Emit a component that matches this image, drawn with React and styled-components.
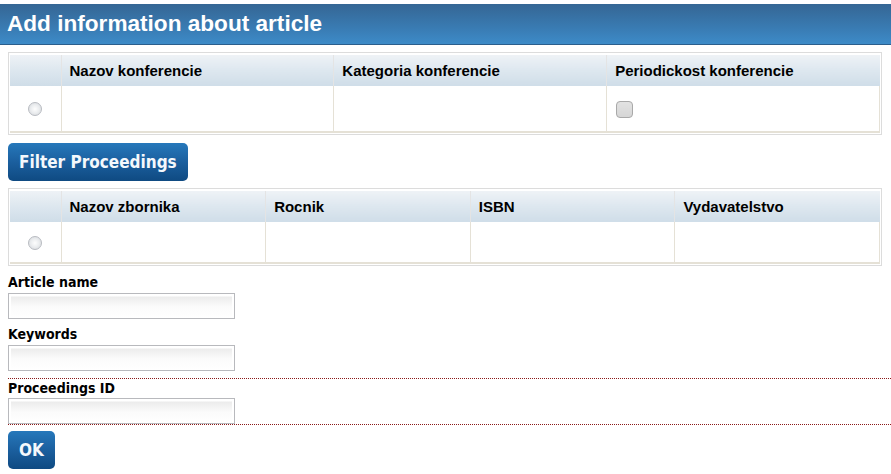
import React from "react";
import styled, { createGlobalStyle } from "styled-components";

const Global = createGlobalStyle`
  html, body { margin: 0; padding: 0; background: #fff; }
  body { font-family: "Liberation Sans", Arial, sans-serif; color: #000; }
`;

const Header = styled.h1`
  margin: 4px 0 0;
  height: 40px;
  padding: 0 7px;
  display: flex;
  align-items: center;
  background: linear-gradient(to bottom, #356694 0%, #3a7fb8 70%, #3d8bc8 100%);
  border-bottom: 1px solid #2b5e8c;
  color: #fff;
  font-family: "Liberation Sans", Arial, sans-serif;
  font-size: 22.6px;
  font-weight: bold;
`;

const Content = styled.div`
  padding: 7px 9px 0 8px;
`;

const Frame = styled.div`
  border: 1px solid #dcdcdc;
  padding: 2px 1px 1px 1px;
`;

const Table = styled.table`
  width: 100%;
  border-collapse: collapse;
  table-layout: fixed;
`;

const Th = styled.th`
  height: 31px;
  padding: 0 8px;
  text-align: left;
  font-size: 15px;
  font-weight: bold;
  background: linear-gradient(to bottom, #eef2f6 0%, #dde7ef 50%, #cfdde8 100%);
  border-left: 1px solid #e4e4e4;
  &:first-child { border-left: none; }
`;

const Td = styled.td`
  height: ${(p) => p.$h}px;
  padding: 0 9px;
  border-left: 1px solid #e5e1d6;
  border-bottom: 2px solid #e5e1d6;
  text-align: ${(p) => (p.$center ? "center" : "left")};
  &:first-child { border-left: none; }
  &:last-child { border-right: 1px solid #e5e1d6; }
`;

const Radio = styled.span`
  display: inline-block;
  width: 12px;
  height: 12px;
  border-radius: 50%;
  border: 1px solid #b9bcc2;
  background: radial-gradient(circle at 50% 50%, #fdfdfd 0%, #eceef0 45%, #d3d6da 100%);
  vertical-align: middle;
`;

const Check = styled.span`
  display: inline-block;
  width: 15px;
  height: 15px;
  border-radius: 4px;
  border: 1px solid #a9a9a9;
  background: linear-gradient(to bottom, #e2e2e2, #d6d6d6);
  vertical-align: middle;
`;

const Button = styled.button`
  display: block;
  height: 38px;
  padding: 0 ${(p) => p.$px}px;
  border: none;
  border-radius: 5px;
  background: linear-gradient(to bottom, #2678bb 0%, #1b5f9e 50%, #0f4a82 100%);
  color: #f4f8fc;
  font-family: Tahoma, "DejaVu Sans Condensed", "DejaVu Sans", sans-serif;
  font-weight: bold;
  font-size: 17px;
  margin: ${(p) => p.$m};
  cursor: pointer;
`;

const Field = styled.div`
  margin-top: ${(p) => p.$mt}px;
  ${(p) =>
    p.$error &&
    `
    margin-right: -9px;
    border-top: 1px dotted #8b1a1a;
    border-bottom: 1px dotted #8b1a1a;
  `}
`;

const Label = styled.label`
  display: block;
  font-family: Tahoma, "DejaVu Sans Condensed", "DejaVu Sans", sans-serif;
  font-weight: bold;
  font-size: 14px;
  line-height: 18px;
  margin-bottom: ${(p) => (p.$tight ? 1 : 2)}px;
`;

const Input = styled.input`
  display: block;
  box-sizing: border-box;
  width: 227px;
  height: 26px;
  border: 1px solid #b8b9bd;
  background: linear-gradient(to bottom, #fff 0, #fff 2px, #ececec 3px, #fbfbfb 13px, #fff 100%);
  box-shadow: inset 2px 0 0 #fff, inset -2px 0 0 #fff;
  outline: none;
`;

const conferenceCols = ["Nazov konferencie", "Kategoria konferencie", "Periodickost konferencie"];
const proceedingsCols = ["Nazov zbornika", "Rocnik", "ISBN", "Vydavatelstvo"];

function DataTable({ cols, firstWidth, rowH, checkCol }) {
  return (
    <Frame>
      <Table>
        <colgroup>
          <col style={{ width: firstWidth }} />
          {cols.map((c) => (
            <col key={c} />
          ))}
        </colgroup>
        <thead>
          <tr>
            <Th />
            {cols.map((c) => (
              <Th key={c}>{c}</Th>
            ))}
          </tr>
        </thead>
        <tbody>
          <tr>
            <Td $h={rowH} $center>
              <Radio />
            </Td>
            {cols.map((c, i) => (
              <Td key={c} $h={rowH}>
                {i === checkCol ? <Check /> : null}
              </Td>
            ))}
          </tr>
        </tbody>
      </Table>
    </Frame>
  );
}

export default function App() {
  return (
    <>
      <Global />
      <Header>Add information about article</Header>
      <Content>
        <DataTable cols={conferenceCols} firstWidth={51} rowH={45} checkCol={2} />
        <Button $px={11} $m="8px 0 7px">Filter Proceedings</Button>
        <DataTable cols={proceedingsCols} firstWidth={51} rowH={40} checkCol={-1} />
        <Field $mt={7}>
          <Label>Article name</Label>
          <Input type="text" />
        </Field>
        <Field $mt={6}>
          <Label>Keywords</Label>
          <Input type="text" />
        </Field>
        <Field $mt={7} $error>
          <Label $tight>Proceedings ID</Label>
          <Input type="text" />
        </Field>
        <Button $px={11} $m="6px 0 0">OK</Button>
      </Content>
    </>
  );
}
